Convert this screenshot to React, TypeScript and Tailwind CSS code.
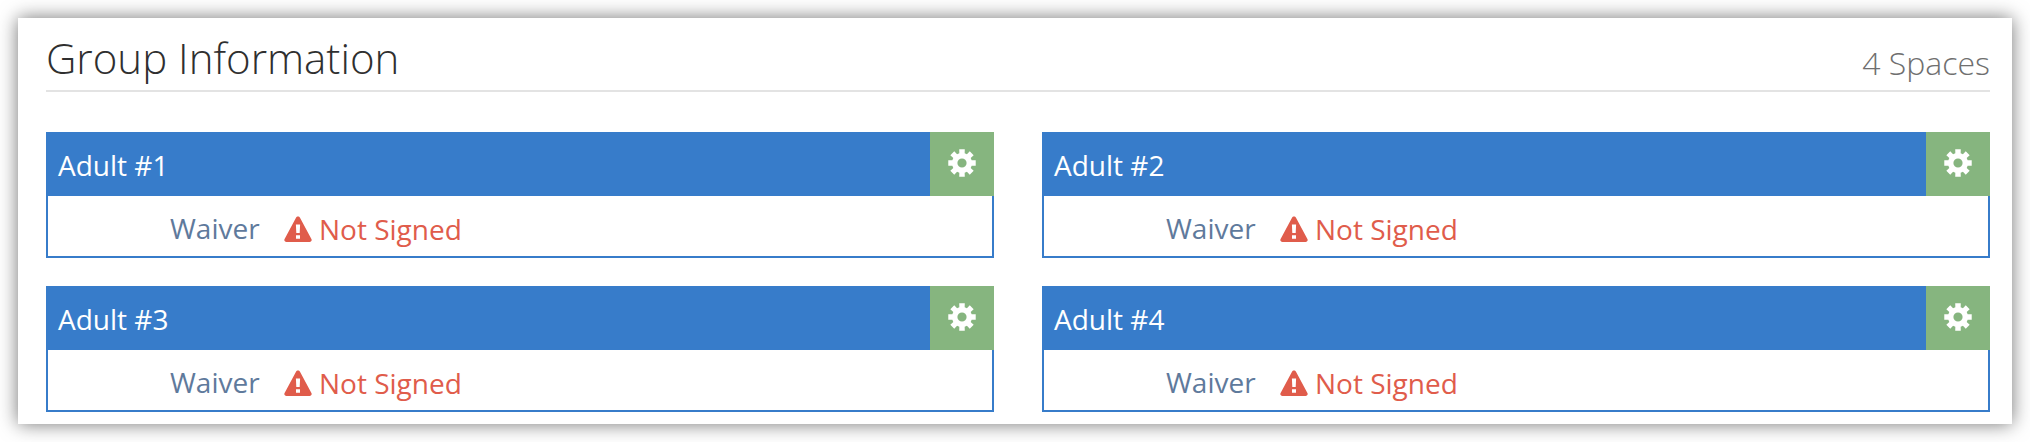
const adults = ['Adult #1', 'Adult #2', 'Adult #3', 'Adult #4'];

// 8 tooth cog, same shape as the old font awesome one
const cogPoints = () => {
  const pts: string[] = [];
  for (let i = 0; i < 8; i++) {
    const a = (i * Math.PI) / 4 - Math.PI / 2;
    const step = 0.2;
    const inner = 10;
    const outer = 14;
    const p = (r: number, t: number) => `${(14 + r * Math.cos(t)).toFixed(2)} ${(14 + r * Math.sin(t)).toFixed(2)}`;
    pts.push(`${i === 0 ? 'M' : 'L'}${p(inner, a - 0.27)}`);
    pts.push(`L${p(outer, a - step)}`);
    pts.push(`L${p(outer, a + step)}`);
    pts.push(`L${p(inner, a + 0.27)}`);
  }
  return pts.join(' ') + ' Z M14 9.4 A4.6 4.6 0 1 0 14 18.6 A4.6 4.6 0 1 0 14 9.4 Z';
};

const CogIcon = () => (
  <svg viewBox="0 0 28 28" className="w-[28px] h-[28px]">
    <path d={cogPoints()} fill="#fff" fillRule="evenodd" />
  </svg>
);

const WarningIcon = () => (
  <svg viewBox="0 0 28 26" className="w-[28px] h-[26px]">
    <path
      fillRule="evenodd"
      fill="#e05c4b"
      d="M14 0.5 C14.9 0.5 15.6 1 16 1.8 L27.4 23 C28.2 24.5 27.2 26 25.6 26 L2.4 26 C0.8 26 -0.2 24.5 0.6 23 L12 1.8 C12.4 1 13.1 0.5 14 0.5 Z M11.9 8.5 L12.3 17 L15.7 17 L16.1 8.5 Z M12 19.3 L12 22.8 L16 22.8 L16 19.3 Z"
    />
  </svg>
);

const AdultCard = ({ name }: { name: string }) => {
  return (
    <div className="border-2 border-t-0 border-[#377cca] h-[126px]">
      <div className="flex h-[64px] bg-[#377cca] -mx-[2px]">
        <div className="flex-1 pl-[12px] pt-[14px] text-[28px] leading-[38px] text-white">{name}</div>
        <div className="flex w-[64px] items-center justify-center bg-[#86b57f] pb-[3px]">
          <CogIcon />
        </div>
      </div>
      <div className="flex items-center pl-[122px] pt-[14px]">
        <span className="w-[114px] pb-[2px] text-[28px] leading-[36px] text-[#5f7a9c]">Waiver</span>
        <WarningIcon />
        <span className="ml-[7px] text-[28px] leading-[36px] text-[#e05c4b]">Not Signed</span>
      </div>
    </div>
  );
};

const App = () => {
  return (
    <div className="h-[442px] bg-white pt-[18px] px-[18px] font-['Open_Sans',sans-serif]">
      <div className="h-[406px] bg-white pl-[28px] pr-[22px] shadow-[0_0_18px_rgba(0,0,0,0.55)]">
        <div className="flex h-[74px] items-end justify-between border-b-2 border-[#e3e3e3]">
          <h2 className="text-[42px] leading-[56px] font-light text-[#2f2f2f] pb-[4px]">Group Information</h2>
          <span className="text-[32px] leading-[40px] font-light text-[#6f6f6f] pb-[7px]">4 Spaces</span>
        </div>
        <div className="grid grid-cols-2 gap-x-[48px] gap-y-[28px] pt-[40px]">
          {adults.map((adult) => (
            <AdultCard key={adult} name={adult} />
          ))}
        </div>
      </div>
    </div>
  );
};

export default App;
